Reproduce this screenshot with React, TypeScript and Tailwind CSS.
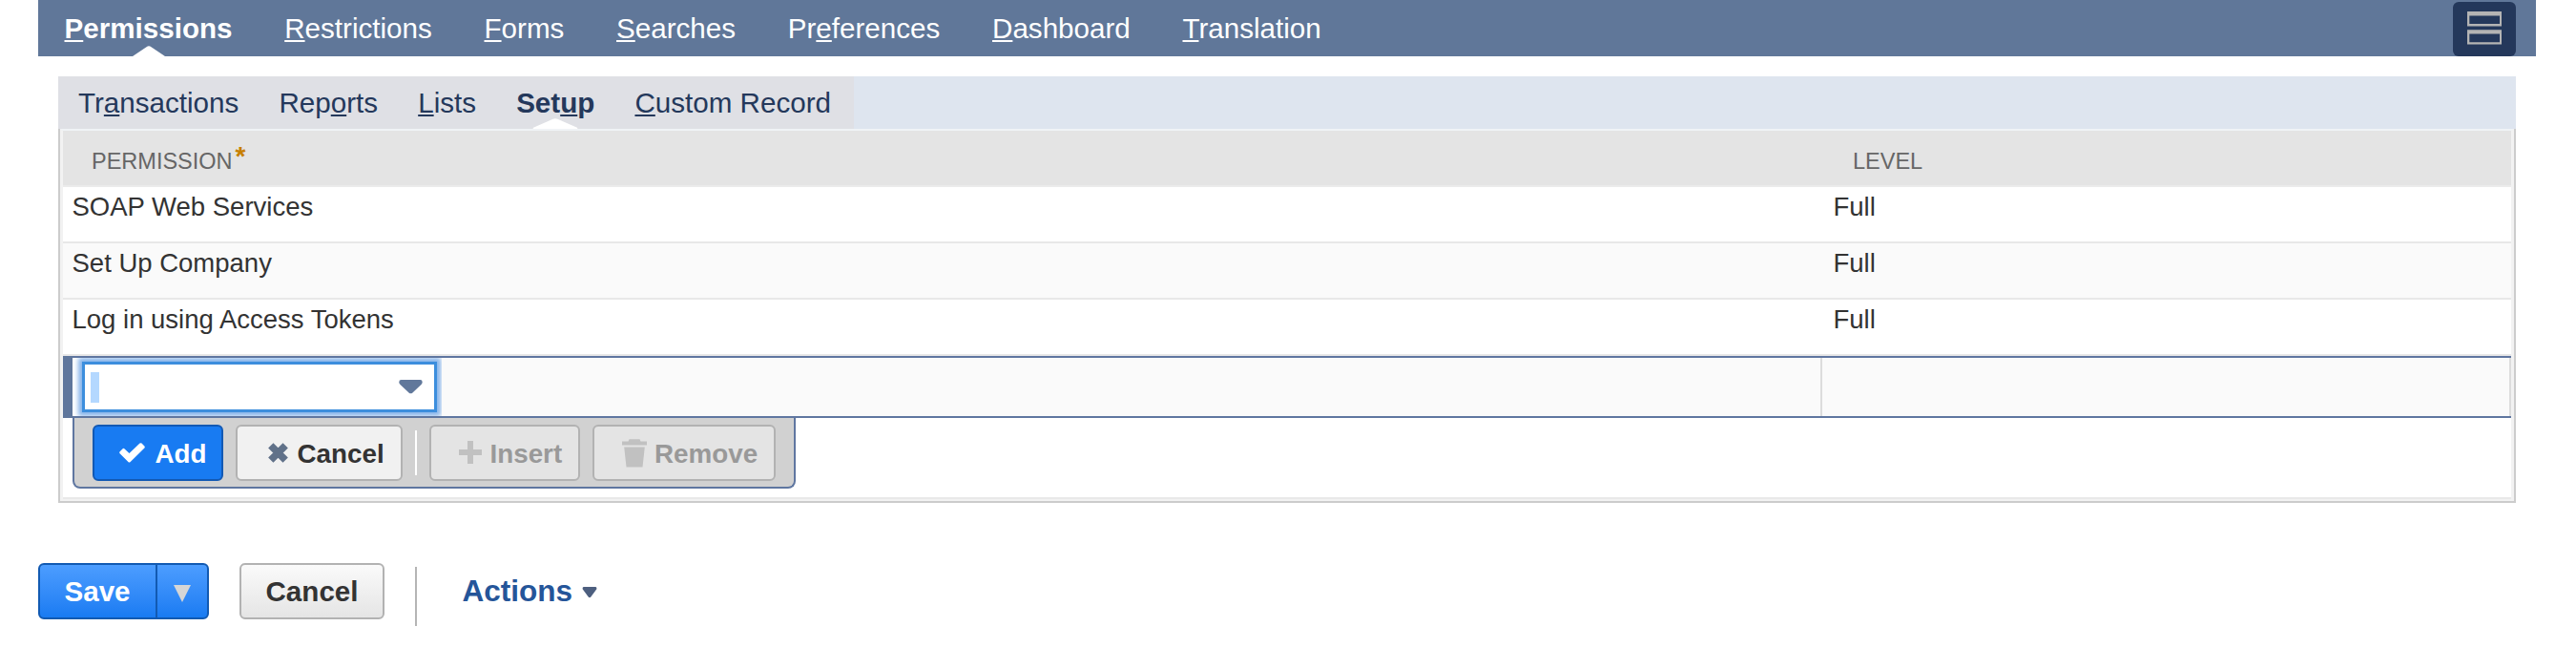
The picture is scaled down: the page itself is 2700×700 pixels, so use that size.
import type { ReactNode } from 'react';
import clsx from 'clsx';

type Tab = {
  label: string;
  // index of the access key letter
  hot: number;
  active?: boolean;
};

type PermissionRow = {
  name: string;
  level: string;
};

const mainTabs: Tab[] = [
  { label: 'Permissions', hot: 0, active: true },
  { label: 'Restrictions', hot: 0 },
  { label: 'Forms', hot: 0 },
  { label: 'Searches', hot: 0 },
  { label: 'Preferences', hot: 2 },
  { label: 'Dashboard', hot: 0 },
  { label: 'Translation', hot: 0 },
];

const subTabs: Tab[] = [
  { label: 'Transactions', hot: 2 },
  { label: 'Reports', hot: 3 },
  { label: 'Lists', hot: 0 },
  { label: 'Setup', hot: 3, active: true },
  { label: 'Custom Record', hot: 0 },
];

const rows: PermissionRow[] = [
  { name: 'SOAP Web Services', level: 'Full' },
  { name: 'Set Up Company', level: 'Full' },
  { name: 'Log in using Access Tokens', level: 'Full' },
];

function TabLabel({ tab }: { tab: Tab }) {
  return (
    <>
      {tab.label.slice(0, tab.hot)}
      <span className="underline decoration-2 underline-offset-[2px] [text-decoration-skip-ink:none]">{tab.label[tab.hot]}</span>
      {tab.label.slice(tab.hot + 1)}
    </>
  );
}

function MainNav() {
  return (
    <nav className="ml-10 flex h-[59px] w-[2618px] items-end justify-between bg-[#607799] pl-[27.5px] pr-[21px]">
      <ul className="flex gap-[54.7px] text-[29.6px] leading-[59px] text-white">
        {mainTabs.map(tab => (
          <li key={tab.label} className={clsx('relative', tab.active && 'font-bold')}>
            <TabLabel tab={tab} />
            {tab.active && (
              <svg className="absolute bottom-0 left-1/2 h-[11px] w-[34px] -translate-x-1/2" viewBox="0 0 34 11">
                <path d="M0 11L14.5 1.2Q17 -0.6 19.5 1.2L34 11Z" fill="#fff" />
              </svg>
            )}
          </li>
        ))}
      </ul>
      <button className="flex h-[57px] w-[66px] rounded-md bg-[#24385b] pl-[15px] pt-[10px]">
        <svg width="36" height="36" viewBox="0 0 36 36" fill="#b4b4b4">
          <path fillRule="evenodd" d="M0 0H36V15.5H0ZM2.3 4.5V13H34V4.5Z" />
          <path fillRule="evenodd" d="M0 19.2H36V34.6H0ZM2.3 23.6V32.2H34V23.6Z" />
        </svg>
      </button>
    </nav>
  );
}

function SubNav() {
  return (
    <div className="h-[55px] bg-[#dee5ef]">
      <ul className="flex h-[55px] w-[834px] gap-[42.1px] whitespace-nowrap bg-[#dfe0e5] pl-[21px] text-[29.6px] leading-[55px] text-[#24385b]">
        {subTabs.map(tab => (
          <li key={tab.label} className={clsx('relative', tab.active && 'font-bold')}>
            <TabLabel tab={tab} />
            {tab.active && (
              <svg className="absolute bottom-0 left-1/2 h-[11px] w-[47px] -translate-x-1/2" viewBox="0 0 47 11">
                <path d="M0 11V10L20.5 1Q23.5 -0.4 26.5 1L47 10V11Z" fill="#fff" />
              </svg>
            )}
          </li>
        ))}
      </ul>
    </div>
  );
}

function LineButton({ className, icon, children }: { className: string; icon: ReactNode; children: ReactNode }) {
  return (
    <button className={clsx('flex h-[59px] items-center rounded-md border-2 text-[27.8px] font-bold leading-[53px]', className)}>
      {icon}
      <span className="pt-0.5">{children}</span>
    </button>
  );
}

function EditRow() {
  return (
    <>
      <div className="flex h-[65px] border-y-2 border-[#5f76a0] bg-[#fafafa]">
        <div className="-my-0.5 w-[10px] bg-[#5f769c]" />
        <div className="flex w-[1832px] items-start overflow-hidden">
          <div className="h-full w-[387px] overflow-hidden bg-gradient-to-r from-white from-95% to-[#fafafa] pl-[10px] pt-1">
            <div className="flex h-[53px] w-[372px] items-center justify-between border-[3px] border-[#3c8edd] bg-white pl-[6px] pr-[12px] shadow-[0_0_5px_4px_#85b3ea]">
              <span className="h-8 w-[9px] bg-[#b4d8ff]" />
              <svg className="-mt-px" width="25" height="15" viewBox="0 0 25 15">
                <path d="M2.5 0H22.5Q25 0 24.6 3Q24.4 4.2 23.5 5L14.5 13.5Q12.5 15.2 10.5 13.5L1.5 5Q.5 4.2 .3 3Q0 0 2.5 0Z" fill="#61789b" />
              </svg>
            </div>
          </div>
        </div>
        <div className="flex-1 border-x-2 border-[#dcdcdc]" />
      </div>

      <div className="ml-[10px] flex h-[74px] w-[758px] rounded-b-lg border-2 border-t-0 border-[#5f76a0] bg-[#d1d1d1] pl-[19px] pt-[7px]">
        <LineButton
          className="w-[137px] border-[#1259b4] bg-[#187bf2] pl-[26px] text-white"
          icon={
            <svg className="mr-[10.5px]" width="27" height="21" viewBox="0 0 27 21" fill="currentColor">
              <path d="M.6 9.200L3.600 6.200Q4.500 5.500 5.400 6.200L10.500 11L21.500 .6Q22.500 -.2 23.500 .6L26.400 3.500Q27.200 4.500 26.400 5.500L11.400 20.200Q10.500 21 9.600 20.200L.6 11.200Q-.2 10.200 .6 9.200Z" />
            </svg>
          }
        >
          Add
        </LineButton>
        <LineButton
          className="ml-[13px] w-[175px] border-[#b2b2b2] bg-[#f1f1f1] pl-[32px] text-[#333]"
          icon={
            <svg className="mr-[9.5px]" width="21" height="21" viewBox="0 0 21 21" stroke="#607189" strokeWidth="7.500">
              <path d="M2.800 2.800L18.200 18.200M18.200 2.800L2.800 18.200" />
            </svg>
          }
        >
          Cancel
        </LineButton>
        <div className="ml-[13px] mt-[6px] h-[47px] w-0.5 bg-white" />
        <LineButton
          className="ml-[13px] w-[158px] border-[#b2b2b2] bg-[#e4e4e4] pl-[29px] text-[#999]"
          icon={
            <svg className="-mt-0.5 mr-[8.5px]" width="24" height="24" viewBox="0 0 24 24" fill="#c1c1c1">
              <path d="M9 0H15V9H24V15H15V24H9V15H0V9H9Z" />
            </svg>
          }
        >
          Insert
        </LineButton>
        <LineButton
          className="ml-[13px] w-[192px] border-[#b2b2b2] bg-[#e4e4e4] pl-[29px] text-[#999]"
          icon={
            <svg className="mr-[8px]" width="26" height="30" viewBox="0 0 26 30" fill="#c1c1c1">
              <path d="M0 2.500H6.500L7.500 .3H18.500L19.500 2.500H26V6.500H0ZM2.200 8.500H23.800L21.500 29.500H4.500Z" />
            </svg>
          }
        >
          Remove
        </LineButton>
      </div>
    </>
  );
}

function PermissionTable() {
  return (
    <div className="h-[392px] border-2 border-t-0 border-[#ccc]">
      <div className="flex h-[390px] flex-col border-x-[3px] border-b-2 border-[#f2f2f2] border-t-2 border-t-[#f0f3f6]">
        <div className="grid h-[59px] grid-cols-[1845.5px_1fr] border-b-2 border-[#ebebeb] bg-[#e4e4e4] pt-[7px] text-[23.5px] leading-[51px] text-[#666]">
          <div className="flex pl-[30px]">
            PERMISSION
            <span className="ml-[3px] text-[28px] font-bold leading-[40px] text-[#c77f02]">*</span>
          </div>
          <div className="pl-[30.5px]">LEVEL</div>
        </div>
        {rows.map((row, i) => (
          <div
            key={row.name}
            className={clsx(
              'grid h-[59px] grid-cols-[1845.5px_1fr] border-b-2 border-[#e8e8e8] text-[27.5px] leading-[42px] text-[#333]',
              i % 2 === 1 && 'bg-[#fafafa]',
            )}
          >
            <div className="pl-[9.5px]">{row.name}</div>
            <div className="pl-[10px]">{row.level}</div>
          </div>
        ))}
        <EditRow />
        <div className="mt-auto h-0.5 bg-[#e9e9e9]" />
      </div>
    </div>
  );
}

function FooterActions() {
  return (
    <div className="ml-10 mt-[63px] flex h-[66px] text-[29.6px] font-bold leading-[55px]">
      <div className="flex h-[59px] w-[179px] rounded-md border-2 border-[#125ab2] bg-gradient-to-b from-[#4c9dff] to-[#187bf2]">
        <button className="w-[123px] border-r-2 border-[#125ab2] pr-px text-center text-white">Save</button>
        <button className="flex flex-1 items-center justify-center">
          <svg className="mt-1" width="18" height="18" viewBox="0 0 18 18">
            <path d="M0 0H18L9 18Z" fill="#d6d6d6" />
          </svg>
        </button>
      </div>
      <button className="ml-[32px] h-[59px] w-[152px] rounded-md border-2 border-[#b2b2b2] bg-gradient-to-b from-[#fafafa] to-[#e5e5e5] text-[#333]">
        Cancel
      </button>
      <div className="ml-[32px] mt-1 h-[62px] w-0.5 bg-[#b5b5b5]" />
      <button className="ml-[47.5px] flex h-[59px] items-center text-[31.5px] leading-[59px] text-[#255599]">
        Actions
        <svg className="ml-[9.5px] mt-[3px]" width="16" height="12" viewBox="0 0 16 12">
          <path d="M1.5 0H14.5Q16 .5 15.2 2.5L9.3 10.500Q8 12 6.700 10.500L.8 2.500Q0 .5 1.500 0Z" fill="#4d5f7f" />
        </svg>
      </button>
    </div>
  );
}

export default function App() {
  return (
    <div className="h-[700px] w-[2700px] overflow-hidden bg-white font-['Liberation_Sans',Arial,sans-serif]">
      <MainNav />
      <div className="ml-[61px] mt-[21px] w-[2576px]">
        <SubNav />
        <PermissionTable />
      </div>
      <FooterActions />
    </div>
  );
}
